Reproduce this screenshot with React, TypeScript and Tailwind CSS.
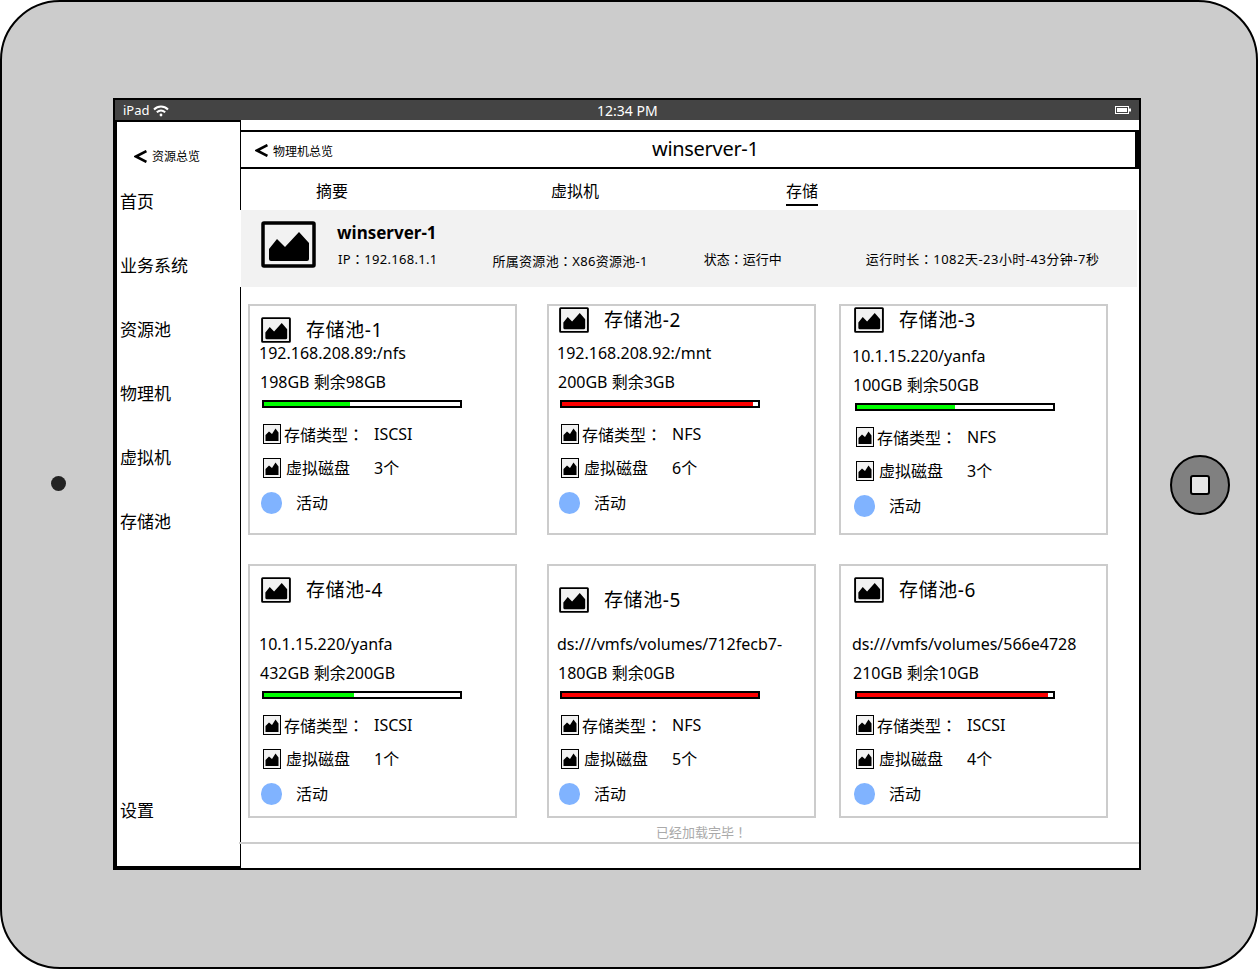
import React from 'react';

const CJK_TC = { fontFamily: '"Noto Sans CJK TC", sans-serif' };

// full-width punctuation sits centred in the reference, the TC cut draws it that way
const Mark = ({ children }: { children: string }) => <span style={CJK_TC}>{children}</span>;

const PlaceholderIcon = ({ className }: { className: string }) => (
  <svg viewBox="0 0 55 47" preserveAspectRatio="none" className={className}>
    <rect x="2" y="2" width="51" height="43" rx="1" fill="#f2f2f2" stroke="#000" strokeWidth="3.5" />
    <path d="M8 28 L16 18 L24 26 L38 11 L48 22 V38 Q48 40 46 40 H10 Q8 40 8 38 Z" fill="#000" />
  </svg>
);

const SmallIcon = () => (
  <svg viewBox="0 0 18 20" preserveAspectRatio="none" className="w-[18px] h-[20px] shrink-0">
    <rect x="0.5" y="0.5" width="17" height="19" fill="#f2f2f2" stroke="#000" strokeWidth="1" />
    <path d="M2.5 11 L6 7.5 L9 10 L12.5 4.5 L15.5 8.5 V17 H2.5 Z" fill="#000" />
  </svg>
);

const Chevron = ({ className }: { className: string }) => (
  <svg viewBox="0 0 12 12" className={className} fill="none">
    <path d="M11.5 1 L1.8 6 L11.5 11" stroke="#000" strokeWidth="2.4" />
  </svg>
);

const Wifi = () => (
  <svg viewBox="0 0 16 12" className="w-[16px] h-[12px] mt-[1px]" fill="none" stroke="#fff" strokeWidth="2">
    <path d="M1 4.5 C5 0.5 11 0.5 15 4.5" />
    <path d="M3.8 7.2 C6.4 5 9.6 5 12.2 7.2" />
    <circle cx="8" cy="10" r="1.4" fill="#fff" stroke="none" />
  </svg>
);

const Battery = () => (
  <svg viewBox="0 0 16 8" className="w-[16px] h-[8px]">
    <rect x="0.5" y="0.5" width="13" height="7" fill="none" stroke="#fff" />
    <rect x="2" y="2" width="10" height="4" fill="#fff" />
    <rect x="14" y="2.5" width="2" height="3" fill="#fff" />
  </svg>
);

type Pool = {
  title: string;
  ip: string;
  size: string;
  pct: string;
  barColor: string;
  kind: string;
  disks: string;
};

const Card = ({ pool, cardClass, iconTop, bodyTop, inset }: {
  pool: Pool;
  cardClass: string;
  iconTop: string;
  bodyTop: string;
  inset: string;
}) => (
  <div className={`w-[269px] border-2 border-[#cccccc] bg-white shrink-0 ${cardClass} ${inset}`}>
    <div className={`flex items-center ${iconTop} pl-[2px]`}>
      <PlaceholderIcon className="w-[30px] h-[26px]" />
      <span className="ml-[15px] text-[19px] tracking-[0.6px] leading-[26px]">{pool.title}</span>
    </div>
    <div className={`${bodyTop} h-[24px] leading-[24px] text-[16px]`}>{pool.ip}</div>
    <div className="mt-[5px] ml-[1px] h-[24px] leading-[24px] text-[16px]">{pool.size}</div>
    <div className="mt-[6px] ml-[3px] w-[200px] h-[8px] border-2 border-black bg-white">
      <div className={`h-full ${pool.pct} ${pool.barColor}`} />
    </div>
    <div className="mt-[14px] ml-[4px] h-[24px] flex items-center text-[16px]">
      <SmallIcon />
      <span className="ml-[3px] w-[90px]">存储类型<Mark>：</Mark></span>
      <span>{pool.kind}</span>
    </div>
    <div className="mt-[10px] ml-[4px] h-[24px] flex items-center text-[16px]">
      <SmallIcon />
      <span className="ml-[5px] w-[88px]">虚拟磁盘</span>
      <span>{pool.disks}</span>
    </div>
    <div className="mt-[11px] ml-[2px] h-[24px] flex items-center text-[16px]">
      <span className="w-[21px] h-[22px] rounded-full bg-[#80b3ff]" />
      <span className="ml-[14px]">活动</span>
    </div>
  </div>
);

const pools: Pool[] = [
  { title: '存储池-1', ip: '192.168.208.89:/nfs', size: '198GB 剩余98GB', pct: 'w-[44%]', barColor: 'bg-[#00ff00]', kind: 'ISCSI', disks: '3个' },
  { title: '存储池-2', ip: '192.168.208.92:/mnt', size: '200GB 剩余3GB', pct: 'w-[191px]', barColor: 'bg-[#ff0000]', kind: 'NFS', disks: '6个' },
  { title: '存储池-3', ip: '10.1.15.220/yanfa', size: '100GB 剩余50GB', pct: 'w-[50%]', barColor: 'bg-[#00ff00]', kind: 'NFS', disks: '3个' },
  { title: '存储池-4', ip: '10.1.15.220/yanfa', size: '432GB 剩余200GB', pct: 'w-[46%]', barColor: 'bg-[#00ff00]', kind: 'ISCSI', disks: '1个' },
  { title: '存储池-5', ip: 'ds:///vmfs/volumes/712fecb7-', size: '180GB 剩余0GB', pct: 'w-full', barColor: 'bg-[#ff0000]', kind: 'NFS', disks: '5个' },
  { title: '存储池-6', ip: 'ds:///vmfs/volumes/566e4728', size: '210GB 剩余10GB', pct: 'w-[191px]', barColor: 'bg-[#ff0000]', kind: 'ISCSI', disks: '4个' },
];

const navItems = ['首页', '业务系统', '资源池', '物理机', '虚拟机', '存储池'];

export default function App() {
  return (
    <div className="w-[1258px] h-[969px] bg-white overflow-hidden text-black" style={{ fontFamily: '"Noto Sans", "Noto Sans CJK SC", sans-serif' }}>
      <div className="w-full h-full rounded-[60px] border-2 border-black bg-[#cccccc] flex items-center">
        <div className="ml-[49px] -mt-[2px] w-[15px] h-[15px] rounded-full bg-[#222]" />

        <div className="ml-[47px] -mt-[1px] w-[1028px] h-[772px] border-2 border-black bg-white flex flex-col shrink-0">
          <div className="h-[20px] bg-[#444444] text-white flex items-center pl-[8px] pr-[8px] text-[13px] shrink-0">
            <span className="w-[30px] pt-[1px]">iPad</span>
            <Wifi />
            <span className="ml-[428px] text-[14px]">12:34 PM</span>
            <span className="ml-auto"><Battery /></span>
          </div>

          <div className="flex flex-1 min-h-0">
            <aside className="w-[126px] shrink-0 border-l-2 border-t-2 border-b-2 border-r border-black flex flex-col pr-[1px]">
              <div className="flex items-center h-[24px] mt-[22px] ml-[17px]">
                <Chevron className="w-[13px] h-[13px]" />
                <span className="ml-[5px] mt-[2px] text-[12px]">资源总览</span>
              </div>
              <div className="flex flex-col flex-1 mt-[2px] pl-[3px] text-[17px] leading-[64px]">
                {navItems.map(item => (
                  <div key={item} className="h-[64px]">{item}</div>
                ))}
                <div className="mt-auto mb-[23px] h-[64px]">设置</div>
              </div>
            </aside>

            <main className="flex-1 min-w-0 flex flex-col">
              <header className="mt-[10px] h-[39px] border-y-[2px] border-r-[4px] border-black flex items-center relative pl-[14px] shrink-0">
                <Chevron className="w-[13px] h-[13px] mt-[2px]" />
                <span className="ml-[5px] mt-[4px] text-[12px]">物理机总览</span>
                <span className="absolute left-[411px] text-[20px] tracking-[-0.3px] top-[4px] leading-[26px]">winserver-1</span>
              </header>

              <nav className="h-[41px] flex text-[16px] shrink-0">
                <div className="ml-[75px] w-[235px] leading-[44px]">摘要</div>
                <div className="w-[235px] leading-[44px]">虚拟机</div>
                <div className="h-[37px] leading-[44px] border-b-2 border-black">存储</div>
              </nav>

              <section className="relative -ml-[2px] mr-[2px] h-[77px] bg-[#f2f2f2] border-l-2 border-white flex items-start shrink-0">
                <PlaceholderIcon className="ml-[20px] mt-[11px] w-[55px] h-[47px] shrink-0" />
                <div className="ml-[21px]">
                  <div className="mt-[10px] text-[17px] font-bold leading-[26px]">winserver-1</div>
                  <div className="mt-[1px] ml-[1px] text-[13px] tracking-[0.3px] leading-[24px]">IP<Mark>：</Mark>192.168.1.1</div>
                </div>
                <div className="ml-[55px] mt-[39px] text-[13px] tracking-[0.3px] leading-[24px]">所属资源池<Mark>：</Mark>X86资源池-1</div>
                <div className="ml-[56px] mt-[37px] text-[13px] leading-[24px]">状态<Mark>：</Mark>运行中</div>
                <div className="ml-[84px] mt-[37px] text-[13px] tracking-[0.48px] leading-[24px]">运行时长<Mark>：</Mark>1082天-23小时-43分钟-7秒</div>
              </section>

              <div className="flex ml-[7px] mt-[17px]">
                <Card pool={pools[0]} cardClass="h-[231px]" iconTop="pt-[11px]" bodyTop="-mt-[2px]" inset="pl-[9px]" />
                <Card pool={pools[1]} cardClass="h-[231px] ml-[30px]" iconTop="pt-[1px]" bodyTop="mt-[8px]" inset="pl-[8px]" />
                <Card pool={pools[2]} cardClass="h-[231px] ml-[23px]" iconTop="pt-[1px]" bodyTop="mt-[11px]" inset="pl-[11px]" />
              </div>
              <div className="flex ml-[7px] mt-[29px]">
                <Card pool={pools[3]} cardClass="h-[254px]" iconTop="pt-[11px]" bodyTop="mt-[29px]" inset="pl-[9px]" />
                <Card pool={pools[4]} cardClass="h-[254px] ml-[30px]" iconTop="pt-[21px]" bodyTop="mt-[19px]" inset="pl-[8px]" />
                <Card pool={pools[5]} cardClass="h-[254px] ml-[23px]" iconTop="pt-[11px]" bodyTop="mt-[29px]" inset="pl-[11px]" />
              </div>

              <div className="h-[26px] -ml-[2px] border-b-2 border-[#cccccc] relative">
                <div className="ml-[417px] text-[13px] leading-[27px] text-[#aaaaaa]">已经加载完毕<Mark>！</Mark></div>
              </div>
            </main>
          </div>
        </div>

        <div className="ml-[29px] w-[60px] h-[60px] rounded-full border-2 border-black bg-[#808080] flex items-center justify-center shrink-0">
          <div className="w-[20px] h-[20px] rounded-[3px] border-2 border-black bg-[#e6e6e6]" />
        </div>
      </div>
    </div>
  );
}
